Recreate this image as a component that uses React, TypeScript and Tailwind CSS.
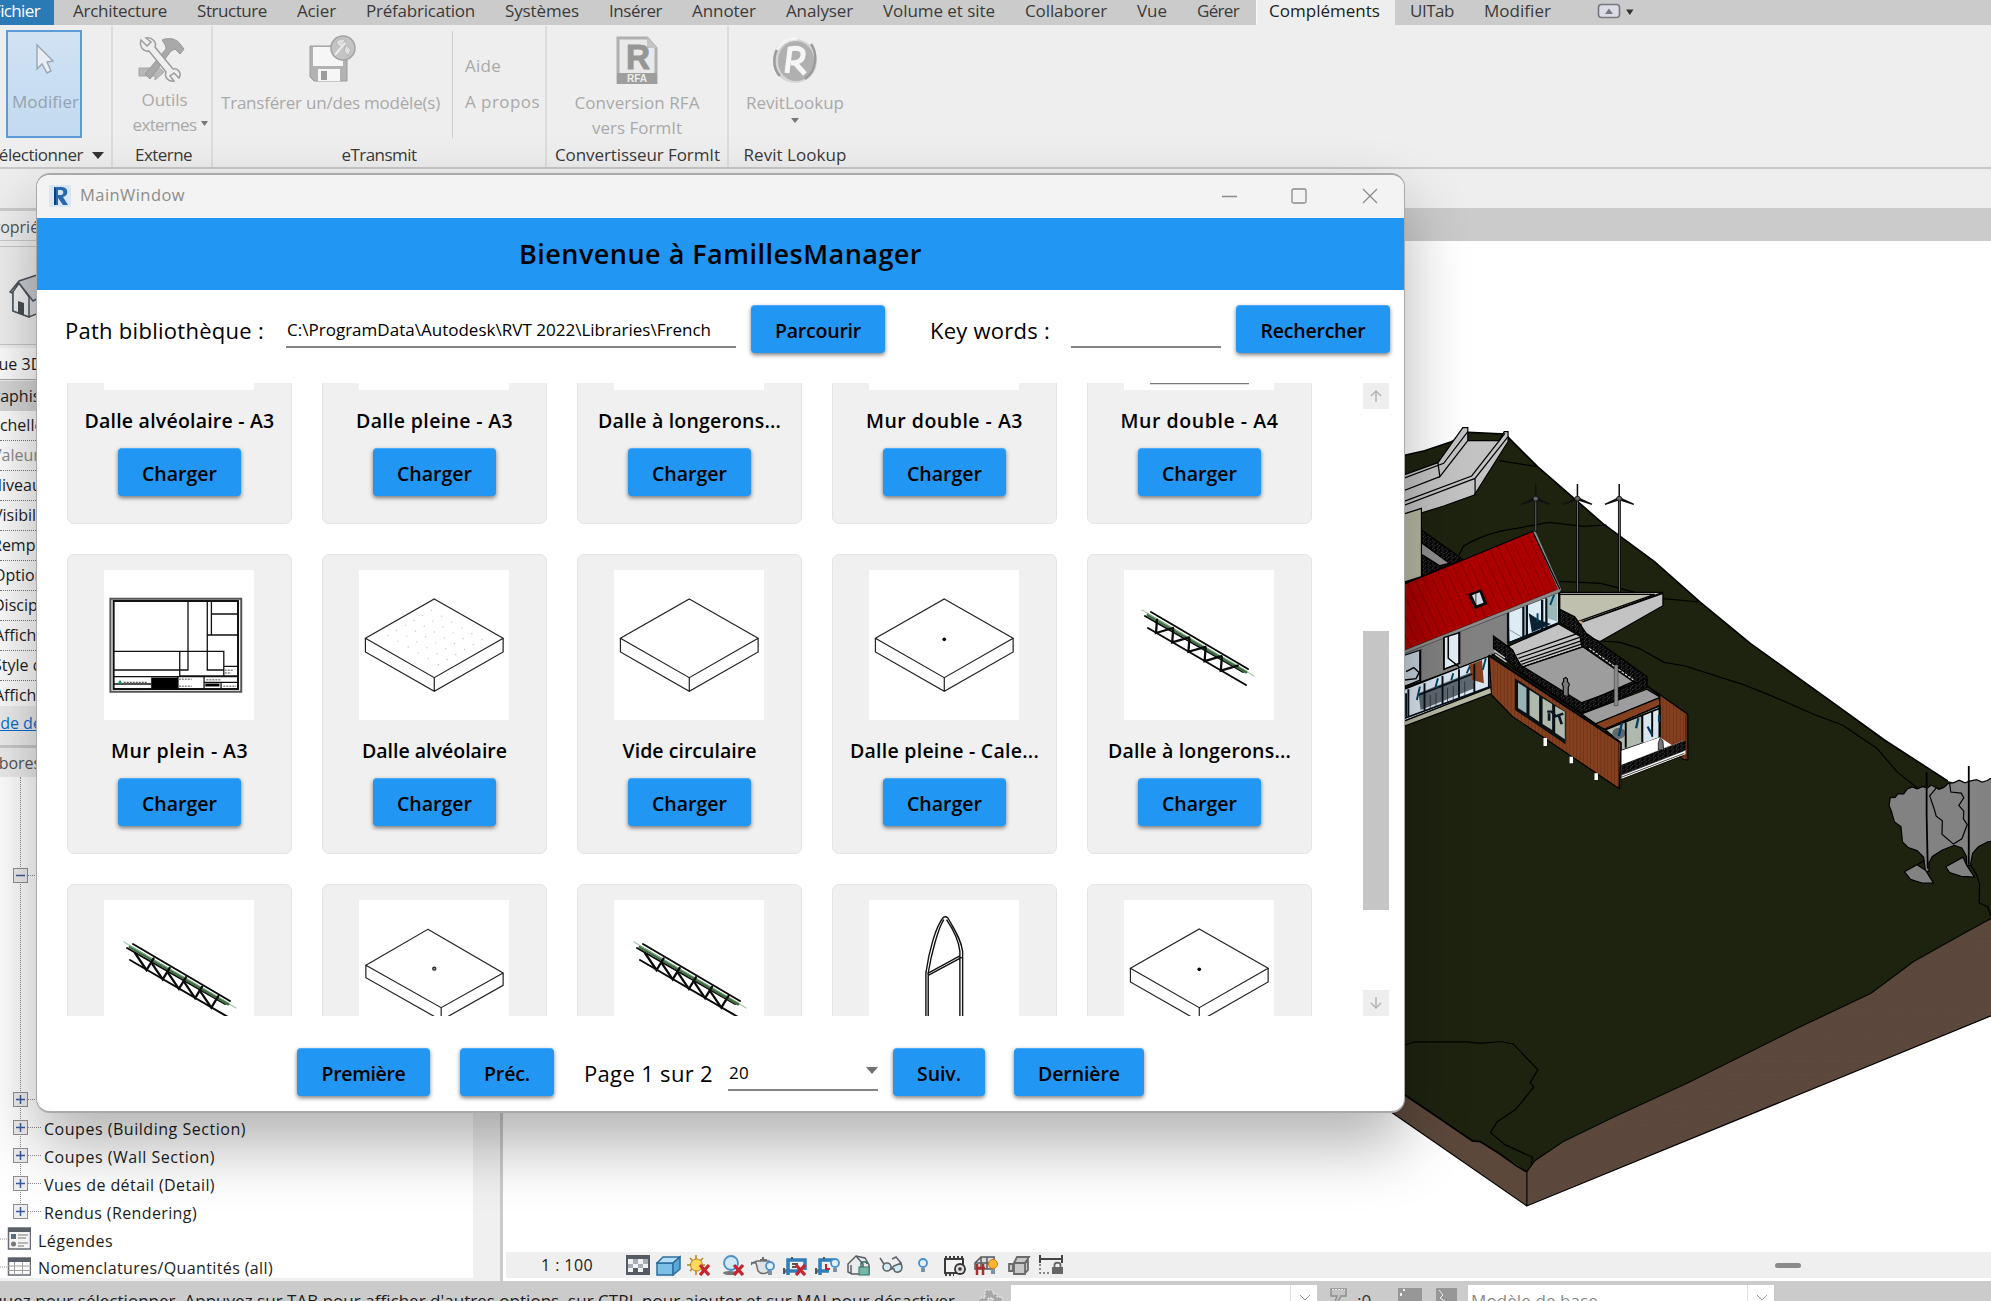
import { useLayoutEffect, useRef } from "react";
import type { ReactNode } from "react";

/** Text whose tracking is adjusted so that it fills exactly `w` pixels. */
function Fit({ w, className = "", children }: { w: number; className?: string; children: string }) {
  const ref = useRef<HTMLSpanElement>(null);
  useLayoutEffect(() => {
    const el = ref.current;
    if (!el) return;
    el.style.letterSpacing = "0px";
    const natural = el.getBoundingClientRect().width;
    el.style.letterSpacing = `${(w - natural) / children.length}px`;
  }, [w, children]);
  return (
    <span ref={ref} className={`inline-block shrink-0 whitespace-pre ${className}`}>
      {children}
    </span>
  );
}

/* ------------------------------------------------------------------ ribbon */

const TABS: [string, number][] = [
  ["Architecture", 94],
  ["Structure", 70],
  ["Acier", 39],
  ["Préfabrication", 109],
  ["Systèmes", 74],
  ["Insérer", 53],
  ["Annoter", 64],
  ["Analyser", 67],
  ["Volume et site", 112],
  ["Collaborer", 82],
  ["Vue", 30],
  ["Gérer", 42],
  ["Compléments", 111],
  ["UITab", 44],
  ["Modifier", 67],
];

function TabBar() {
  return (
    <div className="flex h-[25px] shrink-0 items-start bg-[#cbcbcb] text-[17px] leading-[22px] text-[#3a3a3a]">
      <div className="flex h-[25px] w-[54px] justify-end overflow-hidden bg-[#2a7ab5] pr-[14px] text-white">
        <Fit w={48}>Fichier</Fit>
      </div>
      <div className="flex pl-1">
        {TABS.map(([label, w]) => (
          <div
            key={label}
            className={
              label === "Compléments"
                ? "ml-[2px] h-[25px] border-l border-[#f8f8f8] bg-[#eeeeee] pr-[15px] pl-[12px] text-[#1c1c1c]"
                : "h-[25px] px-[15px]"
            }
          >
            <Fit w={w}>{label}</Fit>
          </div>
        ))}
      </div>
      <svg className="mt-[3px] ml-[31px]" width="38" height="17" viewBox="0 0 38 17">
        <rect x="1.500" y="1.500" width="21" height="13" rx="3" fill="#dcdce4" stroke="#77777f" strokeWidth="1.6" />
        <path d="M8 11 L12 5.500 L16 11Z" fill="#77777f" />
        <path d="M29 6.500h7.500L32.800 12Z" fill="#333" />
      </svg>
    </div>
  );
}

function ToolsIcon() {
  return (
    <svg width="48" height="46" viewBox="0 0 48 46">
      <path d="M1 31h16v-4l9 8-9 8v-4H1Z" fill="#b9b9b9" stroke="#a5a5a5" />
      <path d="M24 3c7-3 15-1 18 4l4 5-4 5-5-5-4 2L12 42l-5-5 21-25c0-4-2-6-4-9Z" fill="#a9a9a9" stroke="#989898" />
      <path
        d="M3 3l6 6 4-4-5-4c6-1 11 4 9 9l18 22c5-1 9 4 6 9l-5-5-4 3 4 5c-6 1-10-4-8-9L11 14C5 15 1 9 3 3Z"
        fill="#efefef"
        stroke="#9d9d9d"
        strokeWidth="1.5"
      />
    </svg>
  );
}

function FloppyIcon() {
  return (
    <svg width="48" height="48" viewBox="0 0 48 48">
      <path d="M1 11h37v35H5l-4-4Z" fill="#b2b2b2" stroke="#9c9c9c" />
      <rect x="4" y="12" width="30" height="19" fill="#f6f6f6" />
      <rect x="9" y="34" width="22" height="12" fill="#f6f6f6" />
      <rect x="12" y="36" width="6" height="9" fill="#9c9c9c" />
      <circle cx="34" cy="13" r="12" fill="#c4c4c4" stroke="#a0a0a0" strokeWidth="1.5" />
      <path d="M27 7c4-4 8-3 9-2l-3 6-3 1Zm10 3 5 5-3 6-4-5Z" fill="#dedede" stroke="#b4b4b4" />
      <path d="M26 20 36 8" stroke="#ececec" strokeWidth="2" />
    </svg>
  );
}

function RfaIcon() {
  return (
    <svg width="42" height="48" viewBox="0 0 42 48">
      <path d="M2 2h29l9 10v35H2Z" fill="#e9e9e9" stroke="#b0b0b0" strokeWidth="3" />
      <path d="M31 1v11h10Z" fill="#c4c4c4" />
      <rect x="1" y="37" width="40" height="11" fill="#9e9e9e" />
      <text x="10" y="33" fontSize="35" fontWeight="700" fontFamily="Liberation Sans" fill="#969696" stroke="#969696" textLength="24" lengthAdjust="spacingAndGlyphs">R</text>
      <text x="21" y="46" fontSize="10" fontWeight="700" textAnchor="middle" fontFamily="Liberation Sans" fill="#ececec">RFA</text>
    </svg>
  );
}

function LookupIcon() {
  return (
    <svg width="48" height="48" viewBox="0 0 48 48">
      <ellipse cx="24" cy="25" rx="22" ry="22" fill="#d6d6d6" />
      <ellipse cx="25" cy="25" rx="18" ry="20" fill="#b0b0b0" />
      <path d="M40 8c6 8 7 26-6 35M9 9C2 17 1 32 9 40" fill="none" stroke="#9b9b9b" strokeWidth="2.500" />
      <path d="M6 14c4-8 12-12 20-11" fill="none" stroke="#f4f4f4" strokeWidth="3" />
      <path d="M16 37 19 13c8-2 14 0 13 6 0 5-5 8-12 8m4 0 10 11" fill="none" stroke="#f6f6f6" strokeWidth="5" />
    </svg>
  );
}

function Panel({ title, className, children }: { title: ReactNode; className: string; children: ReactNode }) {
  return (
    <div className={`flex shrink-0 flex-col ${className}`}>
      <div className="h-[118px]">{children}</div>
      <div className="flex justify-center pt-px leading-[24px] text-[#3a3a3a]">{title}</div>
    </div>
  );
}

function Ribbon() {
  return (
    <div className="h-[144px] shrink-0 border-b-2 border-[#c8c8c8] bg-[#eeeeee] pt-[1px] text-[17px] leading-[25px] text-[#a9a9a9]">
      <div className="flex h-[141px]">
        <Panel
          className="w-[113px] border-r-2 border-[#dcdcdc]"
          title={
            <div className="flex w-full items-center justify-end gap-[9px] overflow-hidden pr-[7px]">
              <Fit w={93}>Sélectionner</Fit>
              <svg className="shrink-0" width="12" height="7"><path d="M0 0h12L6 7Z" fill="#333" /></svg>
            </div>
          }
        >
          <div className="mt-[4px] ml-[6px] flex h-[108px] w-[76px] flex-col items-center border-2 border-[#5b9bd8] bg-gradient-to-b from-[#d1e2f3] to-[#c2daf0]">
            <svg className="mt-[11px] ml-[2px]" width="20" height="32" viewBox="0 0 20 32">
              <path d="M2 2v24l5-5 5 9 4-2-4-9 6-1Z" fill="#e9eef4" stroke="#9aa5b1" strokeWidth="1.4" />
            </svg>
            <Fit w={67} className="mt-[14px] ml-[3px] text-[#94a2b0]">Modifier</Fit>
          </div>
        </Panel>
        <Panel className="w-[100px] border-r-2 border-[#dcdcdc]" title={<Fit w={57} className="ml-[3px]">Externe</Fit>}>
          <div className="flex flex-col items-center pt-[11px]">
            <ToolsIcon />
            <div className="mt-[4px] ml-[5px] flex flex-col items-center leading-[25px]">
              <Fit w={46}>Outils</Fit>
              <Fit w={64}>externes</Fit>
            </div>
            <svg className="-mt-[16px] ml-auto" width="12" height="5"><path d="M2 0h7L5.500 5Z" fill="#777" /></svg>
          </div>
        </Panel>
        <Panel className="w-[334px] border-r-2 border-[#dcdcdc]" title={<Fit w={75}>eTransmit</Fit>}>
          <div className="flex h-full items-start">
            <div className="mt-[5px] flex h-[107px] w-[240px] flex-col items-center border-r border-[#cccccc] pt-[4px]">
              <FloppyIcon />
              <Fit w={219} className="mt-[7px] mr-[4px]">Transférer un/des modèle(s)</Fit>
            </div>
            <div className="flex flex-col items-start pt-[27px] pl-[12px]">
              <Fit w={36}>Aide</Fit>
              <Fit w={75} className="mt-[11px]">A propos</Fit>
            </div>
          </div>
        </Panel>
        <Panel className="w-[182px] border-r-2 border-[#dcdcdc]" title={<Fit w={165} className="ml-px">Convertisseur FormIt</Fit>}>
          <div className="flex flex-col items-center pt-[10px]">
            <RfaIcon />
            <Fit w={125} className="mt-[6px]">Conversion RFA</Fit>
            <Fit w={90}>vers FormIt</Fit>
          </div>
        </Panel>
        <Panel className="w-[132px]" title={<Fit w={103}>Revit Lookup</Fit>}>
          <div className="flex flex-col items-center pt-[10px]">
            <LookupIcon />
            <Fit w={98} className="mt-[6px]">RevitLookup</Fit>
            <svg className="mt-[3px]" width="8" height="5"><path d="M0 0h8L4 5Z" fill="#777" /></svg>
          </div>
        </Panel>
      </div>
    </div>
  );
}

/* -------------------------------------------------------------- left panel */

const PROPS: [string, string][] = [
  ["Échelle de la vue", "-ml-[9px]"],
  ["Valeur de l'éch", "-ml-[8px] text-[#8a8a8a]"],
  ["Niveau de détail", "-ml-[10px]"],
  ["Visibilité", "-ml-[7px]"],
  ["Remplacement", "-ml-[8px]"],
  ["Options", "-ml-[7px]"],
  ["Discipline", "-ml-[7px]"],
  ["Affichage", "-ml-[6px]"],
  ["Style d'affichage", "-ml-[7px]"],
  ["Affichage par", "-ml-[6px]"],
];

function Expander({ open = false }: { open?: boolean }) {
  return (
    <svg width="28" height="16" viewBox="0 0 28 16" className="shrink-0">
      <rect x=".5" y=".5" width="14" height="14" fill="#eeeeee" stroke="#8f8f8f" />
      <path d={open ? "M3 7.500h9" : "M3 7.500h9M7.500 3v9"} stroke="#3c5a9a" strokeWidth="1.500" />
      <path d="M15 7.500h13" stroke="#8a8a8a" strokeDasharray="1 1" />
    </svg>
  );
}

const TREE: [string, number][] = [
  ["Coupes (Building Section)", 202],
  ["Coupes (Wall Section)", 171],
  ["Vues de détail (Detail)", 171],
  ["Rendus (Rendering)", 153],
];

function LeftPanel() {
  return (
    <div className="flex w-[503px] shrink-0 flex-col border-r-[3px] border-[#cbcbcb] bg-[#f0f0f0] text-[16px] leading-[30px] *:shrink-0">
      <div className="h-[33px] overflow-hidden border-t-[3px] border-b border-[#cbcbcb] bg-[#eeeeee] text-[#555]">
        <span className="-ml-[16px] block leading-[32px]">Propriétés</span>
      </div>
      <div className="mt-[5px] h-[99px] border-y border-[#c6c6c6] bg-[#efefef]">
        <svg className="mt-[24px] ml-[9px]" width="56" height="48" viewBox="0 0 56 48">
          <path d="M4 20v20l16 6 30-12V14Z" fill="#d5d8dd" stroke="#50555c" strokeWidth="1.5" />
          <path d="M4 20v20l16 6V26L10 12Z" fill="#f1f2f4" stroke="#50555c" strokeWidth="1.5" />
          <path d="M1 21 10 10 40 0l14 14-30 16L10 12 3 22Z" fill="#c9ccd2" stroke="#50555c" strokeWidth="1.5" />
          <path d="M9 30l6 2v12l-6-2Z" fill="#4a4d52" />
        </svg>
      </div>
      <div className="mt-[3px] h-[32px] overflow-hidden border-b border-[#a8a8a8] bg-[#fcfcfc] leading-[33px]">
        <span className="-ml-[11px] block">Vue 3D</span>
      </div>
      <div className="mt-[1px] h-[30px] overflow-hidden bg-[#d6d6d6]">
        <span className="-ml-[18px] block">Graphisme</span>
      </div>
      <div className="h-[295px] overflow-hidden bg-[#fcfcfc]">
        {PROPS.map(([label, cls], i) => (
          <div key={i} className="h-[30px] overflow-hidden border-b border-dotted border-[#777] leading-[29px]">
            <span className={`block ${cls}`}>{label}</span>
          </div>
        ))}
      </div>
      <div className="h-[42px] overflow-hidden border-b-[3px] border-[#c9c9c9] bg-[#ececec] leading-[35px]">
        <span className="-ml-[14px] block text-[#0a6fd0] underline">Aide de propriétés</span>
      </div>
      <div className="h-[29px] overflow-hidden bg-[#ececec] leading-[30px] text-[#555]">
        <span className="-ml-[18px] block">Arborescence</span>
      </div>
      <div className="h-[504px] border-b-[3px] border-[#f0f0f0]">
        <div className="relative h-[501px] w-[473px] overflow-hidden bg-white">
          <div className="absolute top-0 left-[20px] h-[430px] border-l border-dotted border-[#8a8a8a]" />
          <div className="relative flex flex-col">
            <div className="mt-[91px] flex h-[16px] pl-[13px]"><Expander open /></div>
            <div className="mt-[202px] flex h-[28px] items-center pl-[13px]"><Expander /></div>
            {TREE.map(([label, w]) => (
              <div key={label} className="flex h-[28px] items-center gap-[3px] pl-[13px] leading-[28px]">
                <Expander />
                <Fit w={w} className="mt-px">{label}</Fit>
              </div>
            ))}
            <div className="flex h-[28px] items-center gap-[7px] leading-[28px]">
              <svg width="31" height="24" viewBox="0 0 31 24" className="mb-[3px] shrink-0">
                <path d="M0 12h7" stroke="#999" strokeDasharray="1 1" />
                <rect x="8.500" y="1" width="22" height="21" fill="#f4f4f4" stroke="#666b73" strokeWidth="1.500" />
                <rect x="8" y="1" width="23" height="4" fill="#5a5f68" />
                <rect x="11" y="7" width="5" height="5" fill="#5a6b80" />
                <circle cx="13.500" cy="17" r="2.500" fill="#777" />
                <path d="M18 8h10M18 11h8M18 16h10M18 19h6" stroke="#777" />
              </svg>
              <Fit w={75} className="mt-px">Légendes</Fit>
            </div>
            <div className="flex h-[26px] items-center gap-[7px] leading-[28px]">
              <svg width="31" height="20" viewBox="0 0 31 20" className="shrink-0">
                <path d="M0 10h7" stroke="#999" strokeDasharray="1 1" />
                <rect x="8.500" y="1" width="22" height="17" fill="#fafafa" stroke="#666b73" strokeWidth="1.500" />
                <rect x="8" y="1" width="23" height="4" fill="#5a5f68" />
                <path d="M8 9h23M8 13.500h23M14.500 5v13M22.500 5v13" stroke="#a0a0a0" />
              </svg>
              <Fit w={235} className="mt-px">Nomenclatures/Quantités (all)</Fit>
            </div>
          </div>
        </div>
      </div>
    </div>
  );
}

/* ---------------------------------------------------------------- 3D scene */

const NS = { vectorEffect: "non-scaling-stroke" } as const;

function Poly({ p, f, s = "#000" }: { p: string; f: string; s?: string }) {
  return <polygon points={p} fill={f} stroke={s} strokeWidth="1.2" {...NS} />;
}
function Line({ d, w = 1.2, s = "#000" }: { d: string; w?: number; s?: string }) {
  return <path d={d} fill="none" stroke={s} strokeWidth={w} {...NS} />;
}

function Scene() {
  const seams = Array.from({ length: 25 }, (_, i) => i);
  return (
    <svg className="block shrink-0" width="1488" height="1011" viewBox="503 241 1488 1011">
      <defs>
        <pattern id="soil" width="12" height="12" patternUnits="userSpaceOnUse">
          <rect width="12" height="12" fill="#5e4a3d" />
          <path d="M1 0v6M3 0v6M5 0v6M7 7v5M9 7v5M11 7v5M6 1l6 -1M6 4l6 -1M0 9l6 -1M0 12l6 -1" stroke="#524036" strokeWidth=".7" />
        </pattern>
        <pattern id="wood" width="9" height="10" patternUnits="userSpaceOnUse">
          <rect width="9" height="10" fill="#84401f" />
          <path d="M1 0v10" stroke="#6a3015" strokeWidth="2" />
        </pattern>
        <pattern id="mesh" width="12" height="12" patternUnits="userSpaceOnUse">
          <rect width="12" height="12" fill="#050505" />
          <path d="M2 2h2M8 5h2M4 9h2" stroke="#8d8d8d" strokeWidth="2" />
        </pattern>
        <clipPath id="roof"><polygon points="38,553 372,394 443,568 38,750" /></clipPath>
      </defs>

      <g transform="translate(1390 700) scale(.3833)">
        <polygon points="0,190 1424,190 1455,211 1568,240 1568,570 1500,607 1365,683 1255,765 1065,855 775,1000 580,1090 450,1153 378,1202 358,1231 285,1183 235,1152 215,1150 0,1005" fill="#1e2310" />
        <polygon points="1568,570 1500,607 1365,683 1255,765 1065,855 775,1000 580,1090 450,1153 378,1202 357,1231 357,1320 1568,824" fill="url(#soil)" />
        <polygon points="-30,985 38,1030 215,1150 235,1152 285,1183 330,1215 357,1231 357,1320 0,1073 -30,1052" fill="#5c483b" />
        <Line d="M1568 570 1500 607 1365 683 1255 765 1065 855 775 1000 580 1090 450 1153 378 1202 357 1231V1320L1568 824M357 1320 0 1073" />
        <Line d="M38 1030 215 1150 235 1152 285 1183 330 1215 357 1231" w={1.800} />
        <Line d="M38 900 65 892H200L235 896 290 891 322 898 386 965 366 998 375 1010 328 1068 280 1100 262 1128 300 1160 372 1193 368 1212" />
      </g>

      <g transform="translate(1390 400) scale(.3833 .3333)">
        <polygon points="0,170 38,166 90,152 160,125 205,97 300,102 385,200 560,375 690,485 810,607 940,730 1140,895 1290,1020 1455,1143 1455,1200 0,1200" fill="#1e2310" />
        <Line d="M0 172 38 166 90 152 160 125 205 97 300 102 385 200 560 375 690 485 810 607 940 730 1140 895 1290 1020 1455 1143" w={1.600} />
        <Line d="M285 182 385 200M180 465 192 438C235 410 270 395 330 385L415 367 505 379 565 375M443 544 550 550 600 565 640 577M712 596 808 606M550 723 600 727 650 745 715 787 770 798 920 853 1000 890 1110 945 1180 975 1270 1045 1325 1118 1375 1163" />

        <Poly p="0,240 125,188 190,83 203,83 203,122 285,122 298,95 308,95 308,125 220,285 140,318 85,338 0,350" f="#c3c3c3" />
        <Line d="M125 188 130 230 203 122M130 230 0 288M203 95 140 190 0 250M300 100 213 228 0 320M308 110 222 235V285M222 235 0 332" />

        <Poly p="82,390 190,478 130,505 82,530" f="url(#mesh)" />
        <Poly p="82,428 155,490 130,497 82,463" f="#8f8f8f" />
        <Poly p="0,355 82,325 82,530 0,560" f="#b7b8a2" />

        <Poly p="443,577 712,577 497,668 443,628" f="#bfc1ae" />
        <Poly p="497,668 712,580 712,617 548,725 505,705" f="#c3c3c3" />
        <Line d="M443 583H690L490 665" />
        <path d="M470 662h30l5 8-28 3Z" fill="#c8a878" />

        <Poly p="0,770 308,635 308,735 262,770 0,880" f="#818181" />
        <Poly p="308,635 440,577 440,672 310,728" f="#dcebf4" />
        <path d="M308 730V635M348 620v92M357 615v90M397 600v86M408 595v86M308 730 442 668" stroke="#061018" strokeWidth="6" />
        <path d="M362 640l28 20 30 12-50 25Z" fill="#0b2233" />
        <path d="M412 592 437 580V665L412 655Z" fill="#9bb9b9" />
        <path d="M428 585 418 615M385 640V665" stroke="#004468" strokeWidth="5" />
        <path d="M312 690 345 712" stroke="#000" />

        <polygon points="0,570 372,394 443,568 0,768" fill="#ad0000" />
        <g clipPath="url(#roof)">
          {seams.map((i) => (
            <path key={i} d={`M${355 - i * 20} ${394 + i * 8}l90 222`} stroke="#6b0000" strokeWidth="2" strokeDasharray="12 2" />
          ))}
        </g>
        <polygon points="372,394 380,394 447,568 443,577 0,778 0,768 438,568" fill="#8c8c8c" stroke="#000" />
        <Line d="M0 570 372 394 443 568" />
        <polygon points="203,582 238,568 254,612 222,628" fill="#0a0a0a" />
        <polygon points="214,586 234,577 244,608 226,616" fill="#d3dce2" />
        <path d="M224 582v34" stroke="#000" strokeWidth="2" />

        <Poly p="0,780 80,750 80,845 0,870" f="#c4d2dc" />
        <path d="M78 750V840L38 860M42 815l20-12 14 15-8 18-30 4" fill="none" stroke="#000" strokeWidth="4" />
        <Poly p="140,713 182,698 182,790 140,808" f="#e3eff6" />
        <path d="M141 713V808L180 790V698M152 710v65l28 25" fill="none" stroke="#000" strokeWidth="4" />

        <Poly p="0,885 260,768 264,862 0,980" f="#d9e6ef" />
        <polygon points="74,880 215,815 220,865 80,930" fill="#5e6870" />
        <path d="M205 795 240 780 245 850 215 840Z" fill="#84401f" />
        <path d="M42 880v70M48 868v80M90 850v82M137 828v84M180 808v85M220 793v85M258 770v92M38 955 262 860M75 885 215 822" fill="none" stroke="#071019" strokeWidth="5" />
        <path d="M78 860 70 900M125 835 118 865M165 820 160 840M208 800 200 820M250 775 242 810" stroke="#004468" strokeWidth="5" />
        <path d="M105 885v40M120 878v40M150 865v40M165 858v40M195 845v40" stroke="#222" strokeWidth="2" />
        <Poly p="0,980 264,862 266,880 0,995" f="#b9baa5" />

        <Poly p="310,738 440,672 500,712 505,740 345,802" f="#c3c3c3" />
        <Line d="M330 765 490 700M335 775 495 712M340 785 500 722M343 793 503 731M348 800 505 740" />
        <Poly p="345,802 505,740 640,842 500,912" f="#9d9d9d" />
        <Poly p="443,628 482,650 512,700 670,830 670,862 635,845 500,738 495,705 443,668" f="url(#mesh)" />
        <path d="M520 745 635 840" stroke="#eee" strokeWidth="3" strokeDasharray="7 4" />

        <Poly p="258,768 603,1030 598,1166 320,950 265,885" f="url(#wood)" />
        <polygon points="326,835 458,935 458,1033 326,930" fill="#0a1013" />
        <polygon points="334,848 356,864 356,940 334,924" fill="#97b2b3" />
        <polygon points="364,870 389,888 389,965 364,946" fill="#b0b9ae" />
        <polygon points="398,895 423,912 423,990 398,972" fill="#b0b9ae" />
        <polygon points="431,918 456,935 456,1018 431,998" fill="#b0b9ae" />
        <path d="M410 935h12l10 14 20-8M415 940v22M440 945l8 28" stroke="#0a1722" strokeWidth="7" fill="none" />
        <Poly p="270,708 320,750 340,795 500,908 645,848 670,835 670,862 500,940 335,812 270,745" f="url(#mesh)" />
        <path d="M272 752l28 22M274 762l30 24" stroke="#ccc" strokeWidth="4" />
        <Poly p="500,942 670,868 705,892 535,972" f="#9d9d9d" />
        <Line d="M258 765 603 1028M265 762 535 970" />
        <Poly p="535,972 700,895 712,912 560,988" f="#84401f" />
        <Poly p="672,858 777,943 777,1080 765,1078 704,1020 704,890" f="url(#wood)" />
        <Poly p="560,988 704,918 704,1012 603,1052 603,1028" f="#b0b9ae" />
        <polygon points="662,945 704,922 704,1010 662,1028" fill="#d9e6ef" />
        <circle cx="597" cy="1000" r="17" fill="#5e6870" />
        <path d="M560 990 704 925M615 968v75M658 945v82M684 935v75M703 918v95" stroke="#000" strokeWidth="5" />
        <path d="M605 970 597 1008M648 955 642 985M672 980 684 1005M702 945V965" stroke="#003f63" strokeWidth="6" />
        <polygon points="603,1052 704,1012 735,1035 603,1095" fill="#fff" />
        <polygon points="603,1092 772,1020 772,1062 603,1138" fill="#fff" />
        <polygon points="603,1095 772,1020 772,1050 603,1125" fill="url(#mesh)" />
        <path d="M603 1132 768 1060M603 1138 768 1066M603 1126 768 1052" stroke="#000" strokeWidth="2" />
        <path d="M597 1028v138M603 1028v138M772 943v138" stroke="#1d0d06" strokeWidth="2" />
        <path d="M700 1050v-22l5-14 7 8 2 28Z" fill="#777" stroke="#000" strokeWidth="2" />
        <path d="M405 1014v24M473 1070v20M538 1120v20" stroke="#fff" strokeWidth="9" />

        <path d="M585 795h10v122h-10Z" fill="#8b8b8b" stroke="#000" />
        <path d="M452 885v-25l-3-8 4-8v-8l5-4 5 5v8l5 8-3 10v24" fill="#7a7a7a" stroke="#000" strokeWidth="3" />

        {[380, 489, 598].map((x, i) => (
          <g key={x}>
            <path d={`M${x - 2} 300V${i === 0 ? 394 : 576}h5V300Z`} fill="#777" stroke="#000" strokeWidth="2.500" />
            <path d={`M${x} 252V300M${x} 293l-37 20 35-13M${x} 293l38 20-36-13`} stroke="#111" strokeWidth="4" fill="#222" />
            <circle cx={x} cy="296" r="7" fill="#666" stroke="#000" strokeWidth="2" />
          </g>
        ))}
      </g>

      <g transform="translate(1390 700) scale(.3833)">
        <Poly
          p="1350,232 1362,227 1375,232 1390,226 1402,230 1412,222 1425,229 1432,233 1445,228 1457,217 1470,216 1485,209 1500,216 1515,211 1530,208 1545,214 1558,210 1575,200 1575,368 1560,370 1535,383 1520,400 1514,432 1505,432 1504,408 1492,386 1472,379 1440,392 1415,408 1406,425 1406,447 1397,447 1392,410 1375,393 1352,385 1337,370 1333,330 1316,318 1308,290 1302,275 1305,255 1318,254 1325,245 1340,245"
          f="#828282"
        />
        <Line d="M1425 230 1408 250 1420 285 1425 303 1441 315 1440 350 1470 376 1492 362 1506 325 1496 310 1497 290 1484 275 1497 255 1490 243 1463 240 1460 217" />
        <Poly p="1342,448 1375,430 1398,445 1418,478 1390,478 1358,468" f="#828282" />
        <Poly p="1450,435 1495,410 1505,432 1525,462 1490,460 1460,450" f="#828282" />
        <Line d="M1400 188V300L1403 440M1510 172V430" w={1.800} />
        <Line d="M1515 430 1530 455 1538 480 1537 530 1560 540 1568 565M1375 430 1395 418" />
      </g>
    </svg>
  );
}

/* ------------------------------------------------------- view control bar */

function RedX() {
  return <path d="M13 10l9 10M22 10l-9 10" stroke="#c8232c" strokeWidth="3.200" />;
}
function Bulb({ x = 17, y = 11 }: { x?: number; y?: number }) {
  return (
    <g>
      <circle cx={x} cy={y} r="4" fill="#dff0fc" stroke="#4a90d0" strokeWidth="1.800" />
      <path d={`M${x - 2} ${y + 5}h4v4h-4Z`} fill="#7d8fa0" />
    </g>
  );
}

const VIEW_ICONS: [number, ReactNode][] = [
  [30, (
    <g key="a">
      <rect x="0" y="0" width="24" height="20" fill="#555a63" />
      <path d="M2 4h5v5H2Zm10 0h5v5h-5ZM7 9h5v4H7Zm10 0h5v4h-5ZM2 13h5v4H2Zm10 0h5v4h-5Z" fill="#f2f2f2" />
      <path d="M7 4h5v5H7Zm10 0h5v5h-5ZM2 9h5v4H2Zm10 0h5v4h-5Z" fill="#a9adb5" />
    </g>
  )],
  [31, (
    <g key="b" stroke="#2c6d9c" strokeWidth="1.500">
      <path d="M1 8h16v12H1Z" fill="#7cc0e8" />
      <path d="M1 8l6-6h17l-7 6Z" fill="#b4dff6" />
      <path d="M17 8l7-6v12l-7 6Z" fill="#5aa6d4" />
    </g>
  )],
  [36, (
    <g key="c">
      <path d="M9 0v20M0 10h18M3 3l13 13M16 3 3 16" stroke="#b98318" strokeWidth="1.500" />
      <circle cx="9.500" cy="10" r="6" fill="#ffd95e" stroke="#b98318" />
      <RedX />
    </g>
  )],
  [28, (
    <g key="d" transform="translate(-2 0)">
      <circle cx="10" cy="8" r="7" fill="#cfe9fa" stroke="#4a8fc6" strokeWidth="1.800" />
      <ellipse cx="9" cy="18" rx="7" ry="2" fill="#777" />
      <RedX />
    </g>
  )],
  [32, (
    <g key="e">
      <path d="M1 8l4 0 2 8c3 4 10 3 11-1V6H6Z" fill="#dfe2e5" stroke="#6c7075" strokeWidth="1.500" />
      <path d="M9 5h7M12 2v3M1 7l-1 3" stroke="#6c7075" strokeWidth="2" />
      <Bulb x={19} />
    </g>
  )],
  [32, (
    <g key="f">
      <path d="M5 20V5h17v10M0 16h16" fill="none" stroke="#2f7fb8" strokeWidth="3.500" />
      <path d="M9 9h6M9 12h4M1 13v6M9 2v2" stroke="#555" strokeWidth="2" />
      <RedX />
    </g>
  )],
  [32, (
    <g key="g">
      <path d="M5 20V5h14M0 16h14" fill="none" stroke="#2f7fb8" strokeWidth="3.500" />
      <path d="M11 9v5h4" stroke="#c8232c" strokeWidth="2" fill="none" />
      <path d="M1 13v6M9 2v2" stroke="#555" strokeWidth="2" />
      <Bulb x={20} y={8} />
    </g>
  )],
  [32, (
    <g key="h">
      <path d="M1 9 9 1l9 2 4 7v9H5L1 17Z" fill="#e9ebed" stroke="#5a5e63" strokeWidth="1.500" />
      <path d="M9 1 16 9v10M4 10v8" stroke="#5a5e63" strokeWidth="1.500" fill="none" />
      <rect x="12" y="12" width="10" height="8" fill="#77b7a8" stroke="#2f7566" />
      <path d="M14 12V9c0-3 6-3 6 0" fill="none" stroke="#2f7566" strokeWidth="1.500" />
    </g>
  )],
  [38, (
    <g key="i" fill="#d2ecf5" stroke="#60656b" strokeWidth="1.600">
      <path d="M1 3l6 9M22 8 17 2l-4 2" fill="none" />
      <circle cx="8" cy="12" r="4" />
      <path d="M12 14l3 0c0 5 8 4 8-2l-1-4-7 3Z" />
    </g>
  )],
  [26, <Bulb key="j" x={6} y={8} />],
  [31, (
    <g key="k">
      <path d="M2 4h18v14H2Z" fill="#f2f2f2" stroke="#3b3b3b" strokeWidth="2" />
      <path d="M2 3h19M2 19h9" stroke="#3b3b3b" strokeWidth="4" strokeDasharray="2 2" />
      <circle cx="17" cy="14" r="5" fill="#ddd" stroke="#333" strokeWidth="1.800" />
      <circle cx="17" cy="14" r="1.800" fill="#333" />
    </g>
  )],
  [34, (
    <g key="l">
      <path d="M1 8 7 2h13v12H1Z" fill="#d9d9d9" stroke="#55585c" strokeWidth="1.500" />
      <path d="M1 8h15M7 2v12M13 2v12" stroke="#55585c" strokeWidth="1.500" />
      <path d="M3 9v11M9 9v11M2 13h9" stroke="#a52f2f" strokeWidth="2.500" />
      <circle cx="19" cy="9" r="4.500" fill="#ffb52c" stroke="#c67d10" />
      <path d="M17 14h4v5h-4Z" fill="#7d8fa0" />
    </g>
  )],
  [31, (
    <g key="m" fill="#c8c8c8" stroke="#6b6b6b" strokeWidth="1.800">
      <path d="M6 8h11v11H6ZM6 8l3-6h12l-4 6M17 8l3-2v9l-3 3M1 9h4v7H1Z" />
    </g>
  )],
  [28, (
    <g key="n">
      <path d="M1 0v8M23 0v8M1 4h22" stroke="#444" strokeWidth="2" />
      <path d="M1 9v9h11" stroke="#666" strokeWidth="1.500" strokeDasharray="2 2" fill="none" />
      <rect x="13" y="12" width="11" height="7" fill="#666" />
      <path d="M15.500 12v-2c0-3 6-3 6 0v2" fill="none" stroke="#666" strokeWidth="1.800" />
    </g>
  )],
];

function ViewBar() {
  return (
    <div className="mb-[3px] ml-[3px] flex h-[26px] shrink-0 items-center bg-[#efefef] text-[16px] leading-[26px]">
      <Fit w={52} className="ml-[35px]">1 : 100</Fit>
      <div className="ml-[33px] flex w-[450px]">
        {VIEW_ICONS.map(([w, icon], i) => (
          <span key={i} className="block shrink-0" style={{ width: w }}>
            <svg width="25" height="21" viewBox="0 0 25 21">{icon}</svg>
          </span>
        ))}
      </div>
      <div className="ml-auto mr-[190px] h-[5px] w-[26px] rounded-full bg-[#8a8a8a]" />
    </div>
  );
}

function StatusBar() {
  return (
    <div className="flex h-[20px] shrink-0 items-start overflow-hidden bg-[#cbcbcb] text-[17px] leading-[40px]">
      <div className="flex w-[955px] justify-end overflow-hidden">
        <Fit w={982}>Cliquez pour sélectionner. Appuyez sur TAB pour afficher d'autres options, sur CTRL pour ajouter et sur MAJ pour désactiver</Fit>
      </div>
      <svg className="mt-[8px] ml-[24px] shrink-0" width="24" height="14" viewBox="0 0 24 14">
        <path d="M6 1h8v4h4v3h5v6h-9V9H9v5H0v-5h6Z" fill="#a8a8a8" stroke="#eee" strokeDasharray="2 1" />
      </svg>
      <div className="mt-[4px] ml-[8px] flex h-[16px] w-[306px] shrink-0 justify-end bg-white">
        <div className="border-l border-[#e0e0e0] pt-[9px] pl-[8px]">
          <svg width="18" height="8"><path d="M1 1l5 5 5-5" fill="none" stroke="#999" /></svg>
        </div>
      </div>
      <svg className="mt-[7px] ml-[12px] shrink-0" width="20" height="14" viewBox="0 0 20 14">
        <path d="M2 1h15v7h-5l-3 6H6l2-6H2Z" fill="#c4c4c4" stroke="#8f8f8f" strokeWidth="1.500" />
        <path d="M3 1.500h13" stroke="#eee" strokeDasharray="2 1" />
      </svg>
      <span className="ml-[8px] w-[14px] shrink-0 text-[#333]">:0</span>
      <svg className="mt-[7px] ml-[27px] shrink-0" width="24" height="14"><rect width="24" height="14" fill="#979797" /><path d="M3 5v3M5 2h2" stroke="#eee" strokeWidth="2" /></svg>
      <svg className="mt-[7px] ml-[14px] shrink-0" width="22" height="14"><rect width="21" height="14" fill="#979797" /><path d="M3 2l4 5-3 3 6 4" stroke="#eee" fill="none" /></svg>
      <div className="mt-[4px] ml-[10px] flex h-[16px] w-[306px] shrink-0 justify-between overflow-hidden bg-white pl-[3px] leading-[32px] text-[#8a8a8a]">
        <Fit w={127}>Modèle de base</Fit>
        <div className="border-l border-[#e0e0e0] pt-[9px] pl-[8px]">
          <svg width="18" height="8"><path d="M1 1l5 5 5-5" fill="none" stroke="#999" /></svg>
        </div>
      </div>
    </div>
  );
}

/* ------------------------------------------------------------------ dialog */

function Btn({ label, tw, className }: { label: string; tw: number; className: string }) {
  return (
    <button
      className={`flex h-[48px] shrink-0 items-center justify-center rounded-[4px] border-t border-[#4aa9f8] bg-[#2196f3] pt-[2px] text-[19.5px] font-semibold text-black shadow-[0_2px_4px_rgba(0,0,0,0.5)] ${className}`}
    >
      <Fit w={tw}>{label}</Fit>
    </button>
  );
}

function Slab({ variant }: { variant: "hollow" | "plain" | "dot" | "wide" | "low" }) {
  if (variant === "wide")
    return (
      <g transform="scale(.459 .3333) translate(-782 -121)">
        <path d="M932 209 1096 340 961 444 797 317Z M797 317V354L961 482 1096 377V340M961 444V482" fill="none" stroke="#222" strokeWidth="1.200" {...NS} />
        <ellipse cx="946" cy="327" rx="3.500" ry="4.500" fill="#999" stroke="#222" strokeWidth="1.200" {...NS} />
      </g>
    );
  const dots: [number, number][] = [];
  for (let i = 0; i < 6; i++) for (let j = 0; j < 6; j++) dots.push([940 + i * 22 - j * 19, 212 + i * 17 + j * 15 + i * 0.5]);
  return (
    <g transform="scale(.459 .3333) translate(-782 -91)">
      <path d="M946 178 1096 296 946 414 796 296Z M796 296V337L946 455 1096 337V296M946 414V455" fill="none" stroke="#222" strokeWidth="1.200" {...NS} />
      {variant === "hollow" && dots.map(([x, y], i) => <ellipse key={i} cx={x} cy={y} rx="1.500" ry="2" fill="#c9bfb2" />)}
      {(variant === "dot" || variant === "low") && <ellipse cx="946" cy="299" rx="4" ry="5.500" fill="#000" />}
    </g>
  );
}

function Truss({ lower = false }: { lower?: boolean }) {
  const xs = [0, 1, 2, 3, 4];
  return (
    <g fill="none" strokeLinecap="round" transform={lower ? "translate(2 2)" : "translate(0 0)"}>
      <path d="M18 40 130 106" stroke="#a9c7a9" strokeWidth="1.200" />
      <path d="M27 42 124 99M21 46 119 102" stroke="#0a0a0a" strokeWidth="2" />
      <path d="M24 45 122 102" stroke="#3f6b43" strokeWidth="3" />
      <path d="M24 44 123 101" stroke="#9ccaa0" strokeWidth=".8" />
      <path d="M24 58 122 115" stroke="#0a0a0a" strokeWidth="2" />
      {xs.map((i) => (
        <path
          key={i}
          d={lower
            ? `M${29 + i * 16.200} ${51 + i * 9.400}l11.500 17 7-11.500`
            : `M${33 + i * 16.200} ${50 + i * 9.400}l-1 13 17-5`}
          stroke="#0a0a0a"
          strokeWidth="2.300"
        />
      ))}
    </g>
  );
}

function Drawing() {
  return (
    <g transform="scale(.459 .3333) translate(-227 -91)" fill="none" stroke="#111">
      <path d="M241 177H526V456H241Z" strokeWidth="2" {...NS} stroke="#555" />
      <path d="M248 184H519V448H248Z" strokeWidth="2" {...NS} />
      <path d="M410 184V391H248M248 335H488V409H392V335M452 184V391H488M461 184V286M452 286H519M461 223H519M488 380H519M488 409H519M248 411H519M248 433H330M445 412V448M388 412V448M445 428H519M482 428V448" strokeWidth="1.300" {...NS} />
      <path d="M330 414H388V448H330ZM448 432H478V440H448Z" fill="#000" />
      <path d="M257 432l5-12 5 12Z" fill="#17886e" stroke="none" />
      <path d="M270 431h50" strokeWidth="3" strokeDasharray="2 1" {...NS} stroke="#555" />
      <path d="M390 419h28M390 440h28M450 420h32M490 392h18M490 400h14M487 440h28" stroke="#888" strokeWidth="1.500" strokeDasharray="2 1" {...NS} />
    </g>
  );
}

function Pile() {
  return (
    <g transform="scale(.459 .3333) translate(-369 -121)" fill="none" stroke="#111" strokeWidth="1.400">
      <path d="M493 475V340C500 270 515 200 530 175Q535 168 541 175C555 210 570 240 573 275V475M498 475V340C505 280 520 205 532 180M567 475V275C565 245 550 205 538 180M496 342 568 288M497 348 571 293M493 335v14" {...NS} />
    </g>
  );
}

type Item = { name: string; w: number; art: ReactNode };
const ROWS: Item[][] = [
  [
    { name: "Dalle alvéolaire - A3", w: 190, art: null },
    { name: "Dalle pleine - A3", w: 157, art: null },
    { name: "Dalle à longerons...", w: 183, art: null },
    { name: "Mur double - A3", w: 157, art: null },
    { name: "Mur double - A4", w: 158, art: <path d="M26 143.500H125" stroke="#777" strokeWidth="1.500" /> },
  ],
  [
    { name: "Mur plein - A3", w: 137, art: <Drawing /> },
    { name: "Dalle alvéolaire", w: 145, art: <Slab variant="hollow" /> },
    { name: "Vide circulaire", w: 134, art: <Slab variant="plain" /> },
    { name: "Dalle pleine - Cale...", w: 189, art: <Slab variant="dot" /> },
    { name: "Dalle à longerons...", w: 183, art: <Truss /> },
  ],
  [
    { name: "Poutre", w: 60, art: <Truss lower /> },
    { name: "Dalle", w: 50, art: <Slab variant="wide" /> },
    { name: "Poutre", w: 60, art: <Truss lower /> },
    { name: "Pieu", w: 42, art: <Pile /> },
    { name: "Dalle", w: 50, art: <Slab variant="low" /> },
  ],
];

function Card({ item, bare }: { item: Item; bare: boolean }) {
  return (
    <div className="flex h-[300px] w-[225px] flex-col items-center rounded-[7px] border border-[#e4e4e4] bg-[#f0f0f0] pt-[15px]">
      <svg className="mr-px shrink-0 bg-white" width="150" height="150" viewBox="0 0 150 150">{item.art}</svg>
      {!bare && (
        <>
          <div className="mt-[15px] text-[19.5px] leading-[32px] font-semibold"><Fit w={item.w}>{item.name}</Fit></div>
          <Btn label="Charger" tw={75} className="mt-[11px] w-[123px]" />
        </>
      )}
    </div>
  );
}

function Dialog() {
  return (
    <div className="absolute top-[173px] left-[36px] flex h-[940px] w-[1369px] flex-col overflow-hidden rounded-[14px] border-x border-y-2 border-[#a9a9a9] bg-white text-black shadow-[0_32px_64px_rgba(0,0,0,0.3)]">
      <div className="flex h-[43px] shrink-0 items-center bg-[#f3f3f3] pb-[2px] pl-[12px]">
        <svg width="22" height="22" viewBox="0 0 22 22">
          <rect width="22" height="22" fill="#d9e6f5" />
          <path d="M5 2h8c7 0 7 9 1 10l5 8h-5L9 13v7H5Zm4 3v5h3c3 0 3-5 0-5Z" fill="#2769b0" fillRule="evenodd" />
          <path d="M5 2v18h2V4Z" fill="#123f77" />
        </svg>
        <Fit w={105} className="ml-[9px] text-[16.5px] text-[#8c8c8c]">MainWindow</Fit>
        <svg className="ml-auto mr-[26px]" width="156" height="16" viewBox="0 0 156 16" fill="none" stroke="#8a8a8a" strokeWidth="1.300">
          <path d="M0 8.500h15M141 1l14 14M155 1l-14 14" />
          <rect x="70" y="1" width="14" height="14" rx="1.500" />
        </svg>
      </div>
      <div className="flex h-[72px] shrink-0 items-center justify-center bg-[#2196f3] text-[27px] font-semibold">
        <Fit w={403} className="mt-[1px]">Bienvenue à FamillesManager</Fit>
      </div>
      <div className="flex h-[93px] shrink-0 items-start pt-[15px] pl-[28px] text-[22px] leading-[50px]">
        <Fit w={199}>Path bibliothèque :</Fit>
        <div className="ml-[22px] h-[43px] w-[450px] border-b-2 border-[#858585] pl-[1px] text-[17px] leading-[49px]">
          <Fit w={424} className="h-[40px]">C:\ProgramData\Autodesk\RVT 2022\Libraries\French</Fit>
        </div>
        <Btn label="Parcourir" tw={86} className="ml-[15px] w-[134px]" />
        <Fit w={120} className="ml-[45px]">Key words :</Fit>
        <div className="ml-[21px] h-[43px] w-[150px] border-b-2 border-[#858585]" />
        <Btn label="Rechercher" tw={105} className="ml-[15px] w-[154px]" />
      </div>
      <div className="flex h-[633px] shrink-0 overflow-hidden">
        <div className="-mt-[159px] ml-[30px] grid h-max w-[1245px] grid-cols-5 gap-[30px]">
          {ROWS.map((row, r) => row.map((item, c) => <Card key={`${r}-${c}`} item={item} bare={r === 2} />))}
        </div>
        <div className="ml-[51px] flex w-[26px] flex-col bg-white">
          <div className="flex h-[26px] items-center justify-center bg-[#eeeeee]">
            <svg width="12" height="12" fill="none" stroke="#b5b5b5" strokeWidth="1.500"><path d="M6 12V1M1 6l5-5 5 5" /></svg>
          </div>
          <div className="mt-[222px] h-[279px] bg-[#c5c5c5]" />
          <div className="mt-auto flex h-[26px] items-center justify-center bg-[#eeeeee]">
            <svg width="12" height="12" fill="none" stroke="#b5b5b5" strokeWidth="1.500"><path d="M6 0V11M1 6l5 5 5-5" /></svg>
          </div>
        </div>
      </div>
      <div className="flex flex-1 items-start pt-[32px] pl-[260px] text-[22px] leading-[50px]">
        <Btn label="Première" tw={84} className="w-[133px]" />
        <Btn label="Préc." tw={46} className="ml-[30px] w-[94px]" />
        <Fit w={129} className="ml-[30px]">Page 1 sur 2</Fit>
        <div className="ml-[15px] flex h-[43px] w-[150px] items-center justify-between border-b-2 border-[#858585] pl-[1px] text-[17px]">
          <Fit w={20} className="mt-[8px]">20</Fit>
          <svg className="mt-[4px]" width="12" height="7"><path d="M0 0h12L6 7Z" fill="#6f6f6f" /></svg>
        </div>
        <Btn label="Suiv." tw={44} className="ml-[15px] w-[92px]" />
        <Btn label="Dernière" tw={82} className="ml-[29px] w-[130px]" />
      </div>
    </div>
  );
}

export default function App() {
  return (
    <div className="relative flex h-[1301px] w-[1991px] flex-col overflow-hidden bg-[#eeeeee] font-['Open_Sans','Noto_Sans',sans-serif] text-[#1c1c1c]">
      <TabBar />
      <Ribbon />
      <div className="h-[39px] shrink-0 bg-[#eeeeee]" />
      <div className="flex min-h-0 flex-1">
        <LeftPanel />
        <div className="flex flex-1 flex-col bg-white">
          <div className="h-[33px] shrink-0 bg-[#cbcbcb]" />
          <Scene />
          <ViewBar />
        </div>
      </div>
      <StatusBar />
      <Dialog />
    </div>
  );
}
